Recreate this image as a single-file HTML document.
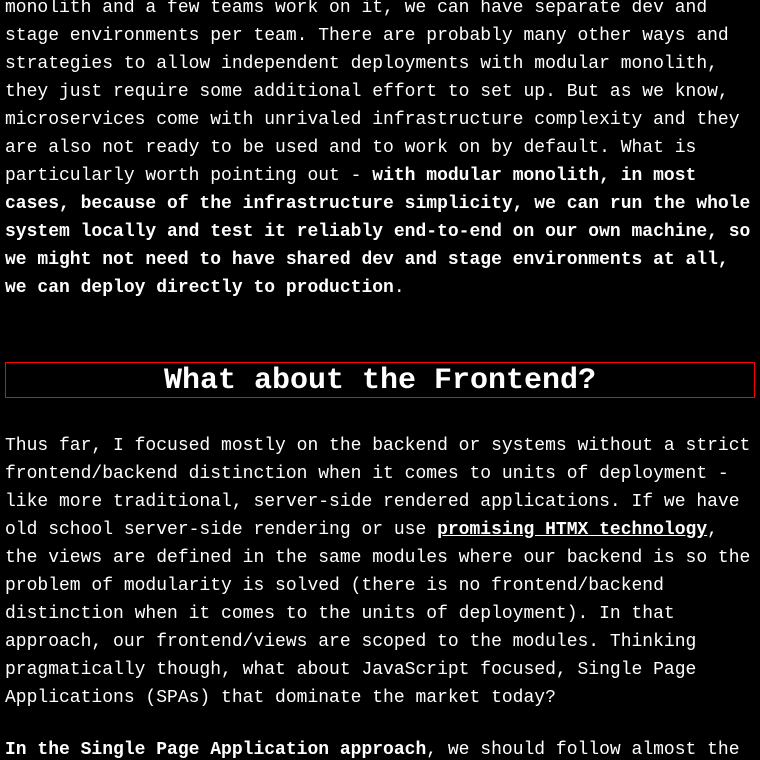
<!DOCTYPE html>
<html><head><meta charset="utf-8"><style>
html,body{margin:0;padding:0;background:#000;width:760px;height:760px;overflow:hidden}
body{font-family:"Liberation Mono",monospace;font-size:18px;color:#fff;position:relative}
.l{position:absolute;left:5px;height:28px;line-height:28px;white-space:pre;margin-top:2px}
b{font-weight:bold}
a{color:#fff;font-weight:bold;text-decoration:underline}
.h{position:absolute;left:5px;top:362px;width:748px;height:34px;border:1px solid #f00;text-align:center;font-size:30px;font-weight:bold;line-height:36px}
</style></head><body>
<div class="l" style="top:-8px">monolith and a few teams work on it, we can have separate dev and</div>
<div class="l" style="top:20px">stage environments per team. There are probably many other ways and</div>
<div class="l" style="top:48px">strategies to allow independent deployments with modular monolith,</div>
<div class="l" style="top:76px">they just require some additional effort to set up. But as we know,</div>
<div class="l" style="top:104px">microservices come with unrivaled infrastructure complexity and they</div>
<div class="l" style="top:132px">are also not ready to be used and to work on by default. What is</div>
<div class="l" style="top:160px">particularly worth pointing out - <b>with modular monolith, in most</b></div>
<div class="l" style="top:188px"><b>cases, because of the infrastructure simplicity, we can run the whole</b></div>
<div class="l" style="top:216px"><b>system locally and test it reliably end-to-end on our own machine, so</b></div>
<div class="l" style="top:244px"><b>we might not need to have shared dev and stage environments at all,</b></div>
<div class="l" style="top:272px"><b>we can deploy directly to production</b>.</div>
<div class="h">What about the Frontend?</div>
<div class="l" style="top:430px">Thus far, I focused mostly on the backend or systems without a strict</div>
<div class="l" style="top:458px">frontend/backend distinction when it comes to units of deployment -</div>
<div class="l" style="top:486px">like more traditional, server-side rendered applications. If we have</div>
<div class="l" style="top:514px">old school server-side rendering or use <a>promising HTMX technology</a>,</div>
<div class="l" style="top:542px">the views are defined in the same modules where our backend is so the</div>
<div class="l" style="top:570px">problem of modularity is solved (there is no frontend/backend</div>
<div class="l" style="top:598px">distinction when it comes to the units of deployment). In that</div>
<div class="l" style="top:626px">approach, our frontend/views are scoped to the modules. Thinking</div>
<div class="l" style="top:654px">pragmatically though, what about JavaScript focused, Single Page</div>
<div class="l" style="top:682px">Applications (SPAs) that dominate the market today?</div>
<div class="l" style="top:734px"><b>In the Single Page Application approach</b>, we should follow almost the</div>
</body></html>
